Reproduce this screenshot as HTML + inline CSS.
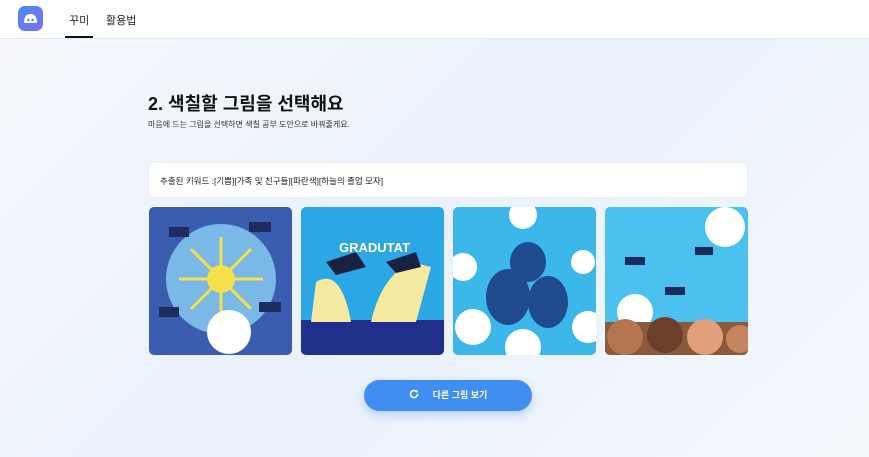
<!DOCTYPE html>
<html><head><meta charset="utf-8"><style>
*{margin:0;padding:0;box-sizing:border-box}
body{width:869px;height:457px;overflow:hidden;font-family:"Liberation Sans","Noto Sans CJK KR",sans-serif;background:linear-gradient(135deg,#f7f9fd 0%,#eaf1fc 50%,#f5f8fd 100%);position:relative;color:#111}
.top{position:absolute;left:0;top:0;width:869px;height:39px;background:#fff;border-bottom:1px solid #e6e8ee}
.logo{position:absolute;left:18px;top:6px;width:25px;height:25px;border-radius:7px;background:linear-gradient(135deg,#4c8cf5,#7a6ff0)}
.nav{position:absolute;top:12px;font-size:11px;color:#222}
.ul{position:absolute;left:65px;top:36px;width:28px;height:2px;background:#111}
h1{position:absolute;left:148px;top:90px;font-size:18px;font-weight:700}
.sub{position:absolute;left:148px;top:119px;font-size:8px;color:#333}
.kw{position:absolute;left:148px;top:162px;width:600px;height:36px;background:#fff;border-radius:6px;border:1px solid #eceef2;font-size:8.5px;padding:12px 0 0 11px;color:#222}
.img{position:absolute;top:207px;width:143px;height:148px;border-radius:5px;overflow:hidden}
.btn{position:absolute;left:364px;top:380px;width:168px;height:31px;border-radius:16px;background:#3f8ef0;color:#fff;font-size:9px;font-weight:700;box-shadow:0 4px 10px rgba(60,130,230,.3);text-align:center;line-height:31px}
</style></head><body>
<div class="top"><div class="logo"><svg width="25" height="25"><path d="M6 17 Q6 8 12.5 8 Q19 8 19 17 Z" fill="#fff"/><circle cx="10.5" cy="14" r="1.2" fill="#4c7cf0"/><circle cx="14.5" cy="14" r="1.2" fill="#4c7cf0"/></svg></div>
<div class="nav" style="left:69px">꾸미</div><div class="nav" style="left:106px">활용법</div><div class="ul"></div></div>
<h1>2. 색칠할 그림을 선택해요</h1>
<div class="sub">마음에 드는 그림을 선택하면 색칠 공부 도안으로 바꿔줄게요.</div>
<div class="kw">추출된 키워드 :[기쁨][가족 및 친구들][파란색][하늘의 졸업 모자]</div>
<div class="img" style="left:149px;background:#3a5db0"><svg width="143" height="148"><circle cx="72" cy="72" r="55" fill="#7ab8e8"/><circle cx="72" cy="72" r="14" fill="#f5e04a"/><g stroke="#f5e04a" stroke-width="3"><line x1="72" y1="30" x2="72" y2="114"/><line x1="30" y1="72" x2="114" y2="72"/><line x1="42" y1="42" x2="102" y2="102"/><line x1="102" y1="42" x2="42" y2="102"/></g><circle cx="80" cy="125" r="22" fill="#fff"/><g fill="#1f2c60"><rect x="20" y="20" width="20" height="10"/><rect x="100" y="15" width="22" height="10"/><rect x="10" y="100" width="20" height="10"/><rect x="110" y="95" width="22" height="10"/></g></svg></div>
<div class="img" style="left:301px;background:#2ca7e5"><svg width="143" height="148"><rect y="113" width="143" height="35" fill="#1f2f8a"/><path d="M15 75 Q40 60 50 115 L10 115Z" fill="#f5e9a0"/><path d="M70 115 Q80 70 110 55 L130 60 L115 115Z" fill="#f5e9a0"/><text x="38" y="45" font-family="Liberation Sans" font-weight="700" font-size="13" fill="#fff">GRADUTAT</text><path d="M25 55 L55 45 L65 60 L35 68Z" fill="#1a2040"/><path d="M85 55 L115 45 L120 60 L95 66Z" fill="#1a2040"/></svg></div>
<div class="img" style="left:453px;background:#3cb7ea"><svg width="143" height="148"><g fill="#fff"><circle cx="10" cy="60" r="14"/><circle cx="20" cy="120" r="18"/><circle cx="135" cy="120" r="16"/><circle cx="70" cy="140" r="18"/><circle cx="130" cy="55" r="12"/><circle cx="70" cy="8" r="14"/></g><g fill="#1f4a8e"><ellipse cx="55" cy="90" rx="22" ry="28"/><ellipse cx="95" cy="95" rx="20" ry="26"/><ellipse cx="75" cy="55" rx="18" ry="20"/></g></svg></div>
<div class="img" style="left:605px;background:#4cc0ee"><svg width="143" height="148"><g fill="#fff"><circle cx="120" cy="20" r="20"/><circle cx="30" cy="105" r="18"/></g><g fill="#1c2a5a"><rect x="20" y="50" width="20" height="8"/><rect x="90" y="40" width="18" height="8"/><rect x="60" y="80" width="20" height="8"/></g><rect y="115" width="143" height="33" fill="#8a5a3e"/><circle cx="20" cy="130" r="18" fill="#b5754e"/><circle cx="60" cy="128" r="18" fill="#6b3f2a"/><circle cx="100" cy="130" r="18" fill="#e1a07a"/><circle cx="135" cy="132" r="14" fill="#c58560"/></svg></div>
<div class="btn"><svg width="10" height="10" style="vertical-align:-1px;margin-right:14px" viewBox="0 0 10 10"><path d="M8.5 5 A3.5 3.5 0 1 1 7.3 2.4" fill="none" stroke="#fff" stroke-width="1.6"/><path d="M6 1 L9 1.5 L8 4.3Z" fill="#fff"/></svg>다른 그림 보기</div>
</body></html>
